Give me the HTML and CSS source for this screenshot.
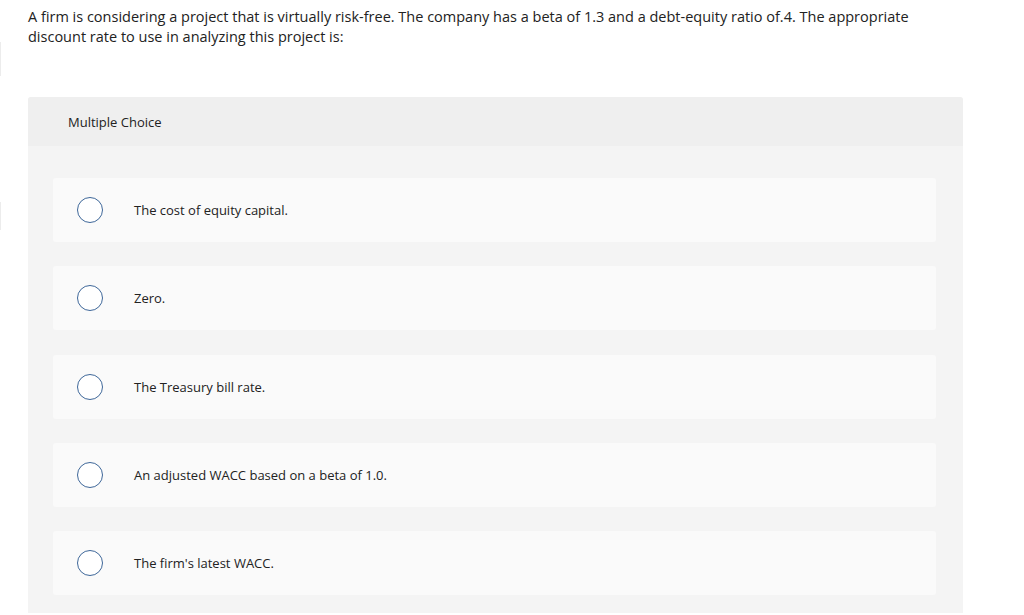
FILE: index.html
```html
<!DOCTYPE html>
<html lang="en">
<head>
<meta charset="utf-8">
<link rel="stylesheet" href="styles.css">
</head>
<body>
<div class="page">
  <p class="question">A firm is considering a project that is virtually risk-free. The company has a beta of 1.3 and a debt-equity ratio of.4. The appropriate discount rate to use in analyzing this project is:</p>
  <div class="choices">
    <div class="choices-header">Multiple Choice</div>
    <div class="choices-body">
      <div class="option"><span class="radio"></span><span class="label">The cost of equity capital.</span></div>
      <div class="option"><span class="radio"></span><span class="label">Zero.</span></div>
      <div class="option"><span class="radio"></span><span class="label">The Treasury bill rate.</span></div>
      <div class="option"><span class="radio"></span><span class="label">An adjusted WACC based on a beta of 1.0.</span></div>
      <div class="option"><span class="radio"></span><span class="label">The firm's latest WACC.</span></div>
    </div>
  </div>
</div>
</body>
</html>
```
FILE: styles.css
```css
html, body {
  margin: 0;
  padding: 0;
  background: #ffffff;
}
body {
  font-family: "Open Sans", "Liberation Sans", sans-serif;
  color: #222222;
  position: relative;
}
body::before,
body::after {
  content: "";
  position: absolute;
  left: 0;
  width: 1px;
  background: #ececec;
}
body::before {
  top: 42px;
  height: 34px;
}
body::after {
  top: 202px;
  height: 28px;
}
.page {
  padding: 7px 0 0 28px;
  width: 935px;
}
.question {
  margin: 0;
  font-size: 14.5px;
  line-height: 20px;
  color: #222;
  width: 910px;
}
.choices {
  margin-top: 50px;
  background: #f4f4f4;
  border-radius: 3px 3px 0 0;
}
.choices-header {
  background: #efefef;
  height: 49px;
  display: flex;
  align-items: center;
  padding-left: 40px;
  font-size: 13px;
  color: #222;
  border-radius: 3px 3px 0 0;
}
.choices-body {
  padding: 32px 27px 18px 25px;
  display: flex;
  flex-direction: column;
  gap: 24.25px;
}
.option {
  height: 64px;
  background: #fafafa;
  border-radius: 3px;
  display: flex;
  align-items: center;
  padding-left: 24px;
}
.radio {
  width: 24px;
  height: 24px;
  border: 1.5px solid #3e6799;
  border-radius: 50%;
  background: #fff;
  flex: none;
}
.label {
  margin-left: 31px;
  font-size: 13px;
  color: #222;
}
```
